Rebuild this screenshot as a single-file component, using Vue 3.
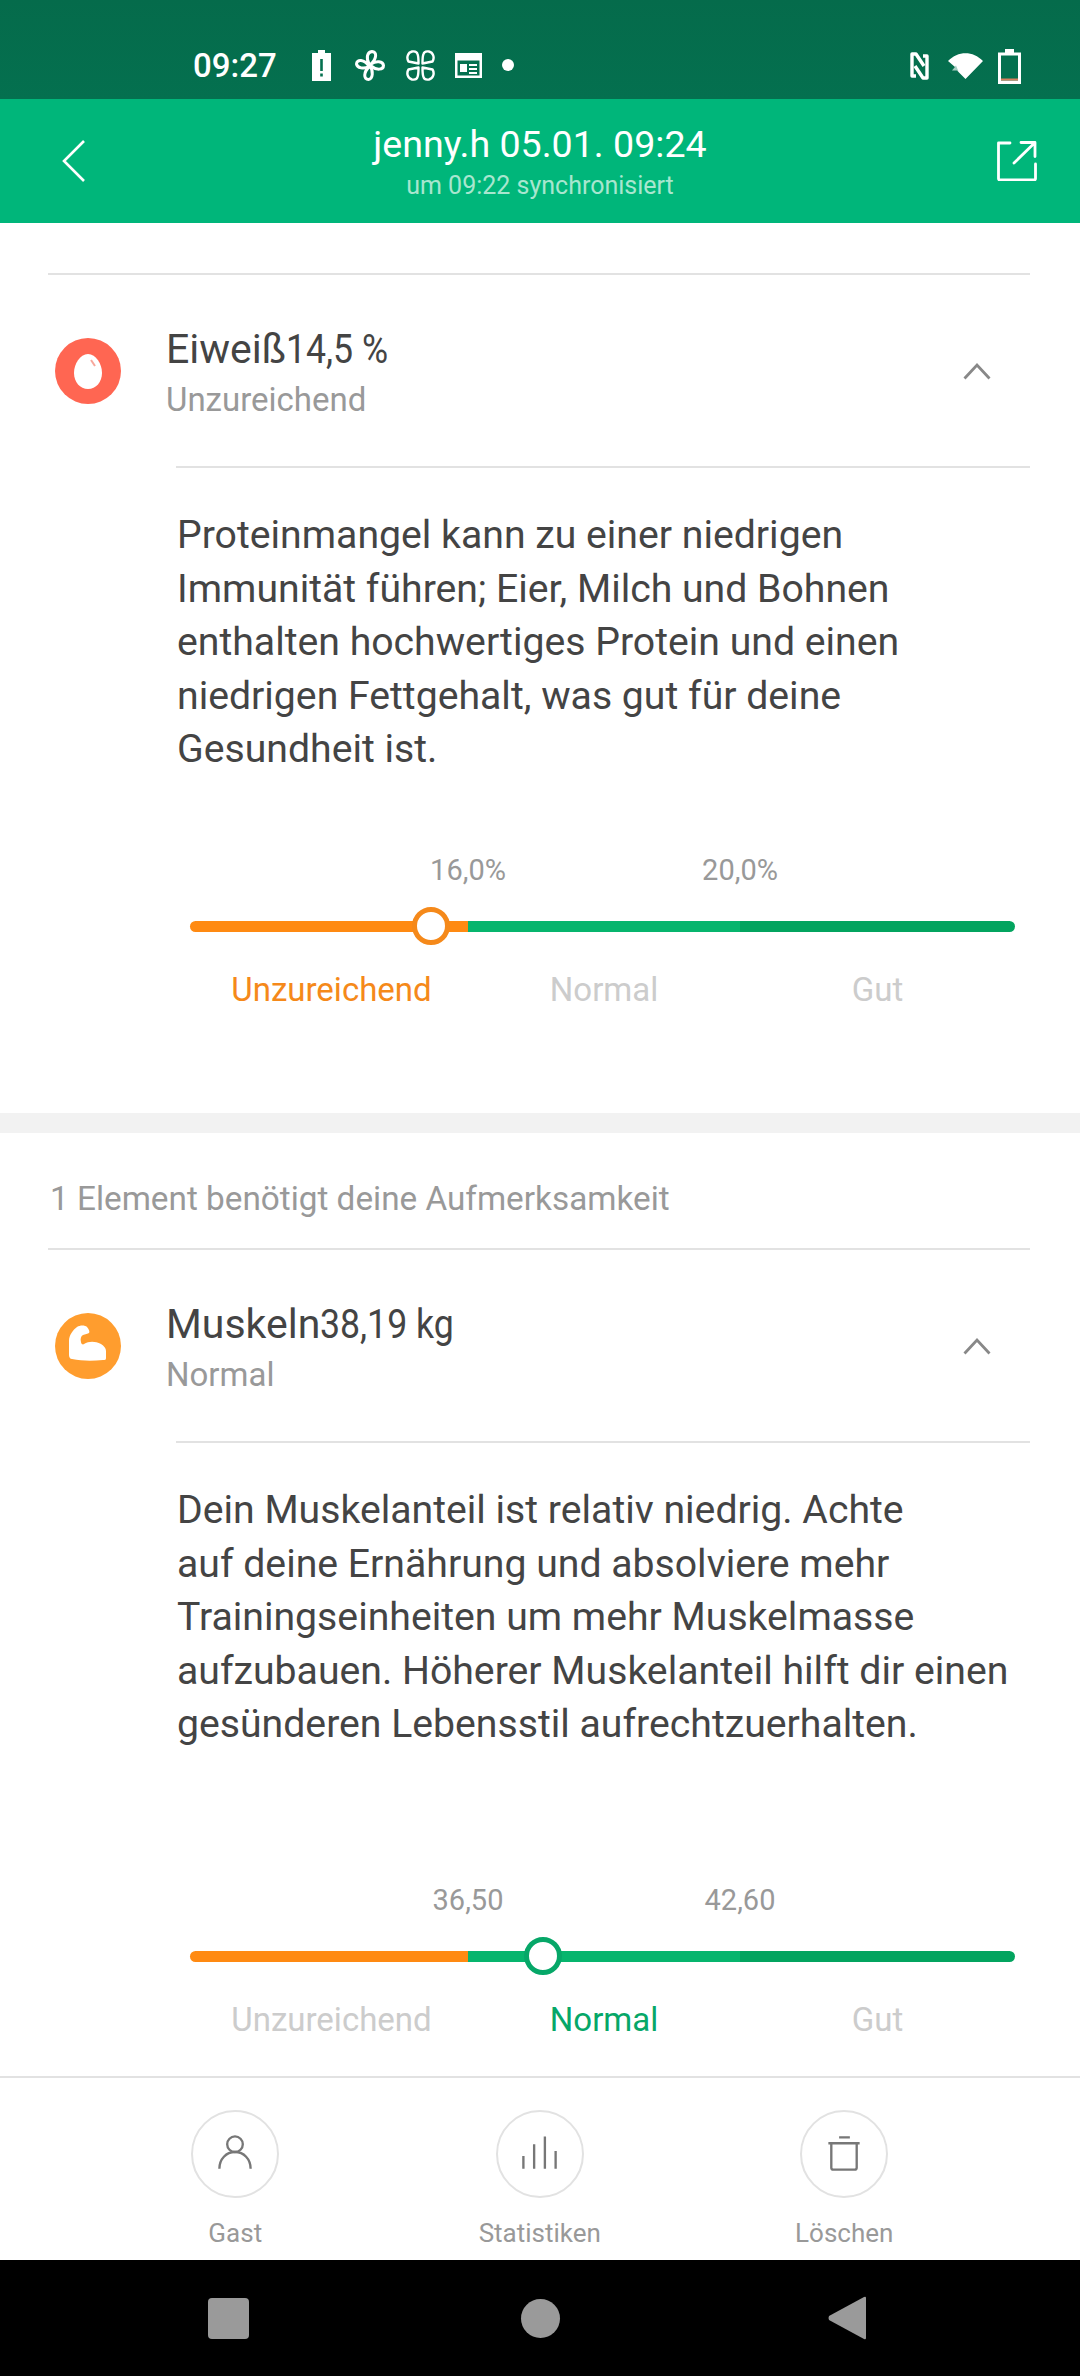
<template>
  <div class="page">
    <div class="status-bar">
      <span class="clock">09:27</span>
      <svg class="st st-alert" viewBox="0 0 19 31"><path d="M6 0h7v3h6v28H0V3h6z" fill="#fff"/><path d="M8.200 9h2.600v12H8.200zM8.200 23.500h2.600v3H8.200z" fill="#04704f"/></svg>
      <svg class="st st-fan" viewBox="0 0 30 31" fill="none" stroke="#fff" stroke-width="3" stroke-linejoin="round"><path d="M14 14C11 8 12 2 17 1.500c5 0 5 7-1 12.500zM16 14c5-3.500 12-3 12.500 1.500 0 4.500-7 5-12.500.5zM15 16c3.500 5 3 13-1.500 13.500-5 0-5.500-7.500 1.500-13.500zM14 16.500C9 19.500 2 18 1.500 14c0-5 8-5 12.500 2.500z"/></svg>
      <svg class="st st-clover" viewBox="0 0 31 31" fill="none" stroke="#fff" stroke-width="2.400" stroke-linejoin="round"><path d="M13.500 13.500 3.500 11.500c-2.500-4-.5-9 3.500-10 3-.5 5 .5 5.500 2.500 1 2 1 5.500 1 9.500zM17.500 13.500l10-2c2.500-4 .5-9-3.500-10-3-.5-5 .5-5.500 2.500-1 2-1 5.500-1 9.500zM13.500 17.500l-10 2c-2.500 4-.5 9 3.500 10 3 .5 5-.5 5.500-2.500 1-2 1-5.500 1-9.500zM17.500 17.500l10 2c2.500 4 .5 9-3.500 10-3 .5-5-.5-5.500-2.500-1-2-1-5.500-1-9.500z"/></svg>
      <svg class="st st-news" viewBox="0 0 27 25"><path d="M0 0h27v25H0z" fill="#fff"/><path d="M2.500 7.500h22v15h-22z" fill="#04704f"/><path d="M5 11h7v8H5zM14 11h8v2h-8zM14 15h8v2h-8zM14 19h8v2h-8z" fill="#fff"/></svg>
      <span class="st-dot"></span>
      <span class="st-gap"></span>
      <svg class="st st-nfc" viewBox="0 0 19 28" fill="none" stroke="#fff" stroke-width="3.400" stroke-linejoin="round"><path d="M6 24H2V2h4l8 12"/><path d="M13 4h4v22h-4L5 14"/></svg>
      <svg class="st st-wifi" viewBox="0 0 35 26"><path d="M0 8C10-2.500 25-2.500 35 8L17.500 26 9 17.500 4 17.500 7 14z" fill="#fff"/><path d="M8 12.500 3 18.500h7.500z" fill="#04704f" opacity=".35"/></svg>
      <svg class="st st-batt" viewBox="0 0 23 35"><path d="M7 0h9v3.500h7V35H0V3.500h7z" fill="#fff"/><path d="M3 6.500h17v25H3z" fill="#04704f"/><path d="M3 29.500h17v2H3z" fill="#d9805f"/></svg>
    </div>

    <header class="top-bar">
      <svg class="back" viewBox="0 0 24 42" fill="none" stroke="#fff" stroke-width="2.600"><path d="M22 1 2 21l20 20"/></svg>
      <div class="top-title">
        <div class="top-name">jenny.h 05.01. 09:24</div>
        <div class="top-sync">um 09:22 synchronisiert</div>
      </div>
      <svg class="share" viewBox="0 0 40 40" fill="none" stroke="#fff" stroke-width="2.800" stroke-linecap="round" stroke-linejoin="round"><path d="M13 2H1.500v35.500q0 1.500 1.500 1.500h34q1.500 0 1.500-1.500V23"/><path d="M17 22 37.500 2M24 1.500h14v14"/></svg>
    </header>

    <main class="content">
      <section v-for="m in metrics" :key="m.name" class="metric" :class="m.cls">
        <p v-if="m.notice" class="notice">{{ m.notice }}</p>
        <div class="rule"></div>
        <div class="metric-row">
          <svg v-if="m.icon === 'egg'" class="metric-icon" viewBox="0 0 66 66">
            <circle cx="33" cy="33" r="33" fill="#ff6652"/>
            <path d="M33 16c8 0 14 10 14 19 0 9-6 16-14 16s-14-7-14-16c0-9 6-19 14-19z" fill="#fff"/>
            <path d="M36 22l4 6" stroke="#f7a79c" stroke-width="2" fill="none"/>
          </svg>
          <svg v-else class="metric-icon" viewBox="0 0 66 66">
            <circle cx="33" cy="33" r="33" fill="#ff9d2e"/>
            <path d="M14 28c0-6 4-11 8-14 3-2 8-2 10 0 2 2 3 5 2 6-1 1-4 1-6 2-2 1-3 4-2 7 0 2 2 3 3 2 5-3 11-3 17 0 3 2 5 4 5 7v7c0 2-1 2-3 2-11 1-21 1-31-1-2 0-3-2-3-4z" fill="#fff"/>
          </svg>
          <div class="metric-text">
            <div class="metric-title">{{ m.name }}<span class="metric-value">{{ m.value }}</span></div>
            <div class="metric-state">{{ m.state }}</div>
          </div>
          <svg class="chevron" viewBox="0 0 28 18" fill="none" stroke="#888" stroke-width="2.800"><path d="M1.500 16.500 14 3l12.500 13.500"/></svg>
        </div>
        <div class="metric-detail">
          <p class="desc">
            <template v-for="line in m.lines" :key="line">{{ line }}<br></template>
          </p>
          <div class="slider">
            <div class="bounds">
              <span v-for="b in m.bounds" :key="b">{{ b }}</span>
            </div>
            <div class="track">
              <span class="seg seg-low"></span>
              <span class="seg seg-mid"></span>
              <span class="seg seg-high"></span>
              <span class="thumb" :style="{ left: m.thumb + 'px', borderColor: m.color }"></span>
            </div>
            <div class="ranges">
              <span v-for="(r, i) in ranges" :key="r" :style="i === m.active ? { color: m.color } : null">{{ r }}</span>
            </div>
          </div>
        </div>
      </section>
    </main>

    <nav class="actions">
      <div class="action">
        <span class="action-circle">
          <svg viewBox="0 0 86 86" fill="none" stroke="#777" stroke-width="2.400"><circle cx="43" cy="33" r="8"/><path d="M27 58c0-10 7-17 16-17s16 7 16 17"/></svg>
        </span>
        <span class="action-label">Gast</span>
      </div>
      <div class="action">
        <span class="action-circle">
          <svg viewBox="0 0 86 86" fill="none" stroke="#777" stroke-width="2.400"><path d="M26 58V45M37 58V33M48 58V25M59 58V40"/></svg>
        </span>
        <span class="action-label">Statistiken</span>
      </div>
      <div class="action">
        <span class="action-circle">
          <svg viewBox="0 0 86 86" fill="none" stroke="#777" stroke-width="2.400"><path d="M30 33v24q0 2 2 2h22q2 0 2-2V33M27 32h32M38 26h11"/></svg>
        </span>
        <span class="action-label">Löschen</span>
      </div>
    </nav>

    <div class="nav-bar">
      <span class="nav-square"></span>
      <span class="nav-circle"></span>
      <svg class="nav-back" viewBox="0 0 38 44"><path d="M36 1q2-1 2 1v40q0 2-2 1L1 24q-1-2 0-4z" fill="#9a9a9a"/></svg>
    </div>
  </div>
</template>

<script setup>
const ranges = ['Unzureichend', 'Normal', 'Gut']

const metrics = [
  {
    name: 'Eiweiß',
    value: '14,5 %',
    state: 'Unzureichend',
    icon: 'egg',
    cls: 'metric-first',
    lines: [
      'Proteinmangel kann zu einer niedrigen',
      'Immunität führen; Eier, Milch und Bohnen',
      'enthalten hochwertiges Protein und einen',
      'niedrigen Fettgehalt, was gut für deine',
      'Gesundheit ist.'
    ],
    bounds: ['16,0%', '20,0%'],
    thumb: 241,
    active: 0,
    color: '#f5891a'
  },
  {
    name: 'Muskeln',
    value: '38,19 kg',
    state: 'Normal',
    icon: 'arm',
    cls: 'metric-second',
    notice: '1 Element benötigt deine Aufmerksamkeit',
    lines: [
      'Dein Muskelanteil ist relativ niedrig. Achte',
      'auf deine Ernährung und absolviere mehr',
      'Trainingseinheiten um mehr Muskelmasse',
      'aufzubauen. Höherer Muskelanteil hilft dir einen',
      'gesünderen Lebensstil aufrechtzuerhalten.'
    ],
    bounds: ['36,50', '42,60'],
    thumb: 353,
    active: 1,
    color: '#06a768'
  }
]
</script>

<style scoped>
.page {
  width: 1080px;
  height: 2376px;
  display: flex;
  flex-direction: column;
  overflow: hidden;
  background: #fff;
  font-family: Roboto, "Noto Sans", sans-serif;
}

.status-bar {
  height: 99px;
  flex-shrink: 0;
  box-sizing: border-box;
  padding: 50px 59px 0 193px;
  display: flex;
  align-items: flex-start;
  background: linear-gradient(#056b4b, #04704f);
}

.clock {
  width: 119px;
  font-size: 33px;
  font-weight: 500;
  line-height: 32px;
  color: #fff;
}

.st {
  display: block;
  flex-shrink: 0;
}

.st-alert { width: 19px; height: 31px; margin-right: 24px; }
.st-fan { width: 30px; height: 31px; margin-right: 20px; }
.st-clover { width: 31px; height: 31px; margin-right: 19px; }
.st-news { width: 27px; height: 25px; margin-top: 3px; margin-right: 20px; }
.st-dot { width: 12px; height: 12px; margin-top: 9px; border-radius: 50%; background: #fff; }
.st-gap { flex: 1; }
.st-nfc { width: 19px; height: 28px; margin-top: 2px; margin-right: 19px; }
.st-wifi { width: 35px; height: 26px; margin-top: 3px; margin-right: 15px; }
.st-batt { width: 23px; height: 35px; margin-top: -1px; }

.top-bar {
  height: 124px;
  flex-shrink: 0;
  box-sizing: border-box;
  padding: 0 43px 0 62px;
  display: flex;
  align-items: center;
  justify-content: space-between;
  background: #00b67a;
}

.back {
  width: 24px;
  height: 42px;
}

.top-title {
  text-align: center;
  color: #fff;
  margin-left: -3px;
}

.top-name {
  font-size: 37.600px;
  line-height: 46px;
}

.top-sync {
  font-size: 25px;
  line-height: 30px;
  margin-top: 4px;
  color: #a8e6cf;
}

.share {
  width: 40px;
  height: 40px;
}

.content {
  flex: 1;
  min-height: 0;
}

.metric-first {
  padding-top: 50px;
  height: 840px;
  border-bottom: 20px solid #f2f2f2;
}

.metric-second .desc {
  margin-bottom: 129px;
}

.notice {
  margin: 0;
  height: 115px;
  box-sizing: border-box;
  padding: 47px 0 0 50px;
  font-size: 33.300px;
  line-height: 38px;
  color: #999;
}

.rule {
  height: 2px;
  margin: 0 50px 0 48px;
  background: #e2e2e2;
}

.metric-row {
  height: 191px;
  box-sizing: border-box;
  padding: 0 50px 0 55px;
  display: flex;
  align-items: center;
}

.metric-icon {
  width: 66px;
  height: 66px;
  flex-shrink: 0;
}

.metric-text {
  flex: 1;
  margin-left: 45px;
  padding-top: 3px;
}

.metric-title {
  font-size: 41px;
  line-height: 50px;
  color: #444;
}

.metric-value {
  display: inline-block;
  transform: scaleX(.87);
  transform-origin: left center;
}

.metric-state {
  margin-top: 6px;
  font-size: 33px;
  line-height: 40px;
  color: #999;
}

.chevron {
  width: 28px;
  height: 18px;
  margin-right: 39px;
}

.metric-detail {
  margin-left: 176px;
}

.desc {
  margin: 0 50px 74px 0;
  padding: 41px 0 0 1px;
  border-top: 2px solid #e2e2e2;
  font-size: 39.200px;
  line-height: 53.500px;
  color: #444;
  white-space: nowrap;
}

.slider {
  margin-left: 14px;
  width: 825px;
}

.bounds {
  display: flex;
  gap: 152px;
  padding-left: 218px;
  height: 40px;
  margin-top: -1px;
}

.bounds span {
  width: 120px;
  text-align: center;
  font-size: 29px;
  line-height: 40px;
  color: #999;
}

.track {
  position: relative;
  height: 11px;
  margin-top: 31px;
  display: flex;
}

.seg {
  display: block;
  height: 100%;
}

.seg-low {
  width: 278px;
  background: #ff8a12;
  border-radius: 6px 0 0 6px;
}

.seg-mid {
  width: 272px;
  background: #06b56d;
}

.seg-high {
  width: 275px;
  background: #03a45f;
  border-radius: 0 6px 6px 0;
}

.thumb {
  position: absolute;
  top: -14px;
  width: 38px;
  height: 38px;
  box-sizing: border-box;
  border: 5px solid;
  border-radius: 50%;
  background: #fff;
  margin-left: -19px;
}

.ranges {
  display: flex;
  margin-top: 38px;
}

.ranges span {
  font-size: 33px;
  line-height: 40px;
  text-align: center;
  color: #ccc;
  box-sizing: border-box;
}

.ranges span:nth-child(1) { width: 278px; padding-left: 5px; }
.ranges span:nth-child(2) { width: 272px; }
.ranges span:nth-child(3) { width: 275px; }

.actions {
  height: 184px;
  flex-shrink: 0;
  box-sizing: border-box;
  border-top: 2px solid #e2e2e2;
  padding: 32px 0 0 108px;
  display: flex;
  background: #fff;
}

.action {
  width: 254.500px;
  margin-right: 50px;
  display: flex;
  flex-direction: column;
  align-items: center;
}

.action-circle {
  width: 88px;
  height: 88px;
  box-sizing: border-box;
  border: 2px solid #e2e2e2;
  border-radius: 50%;
}

.action-circle svg {
  display: block;
  width: 84px;
  height: 84px;
}

.action-label {
  margin-top: 19px;
  font-size: 26px;
  line-height: 32px;
  color: #999;
}

.nav-bar {
  height: 116px;
  flex-shrink: 0;
  box-sizing: border-box;
  padding: 36px 0 0 208px;
  display: flex;
  align-items: flex-start;
  background: #000;
}

.nav-square {
  width: 41px;
  height: 41px;
  margin-top: 2px;
  border-radius: 4px;
  background: #9a9a9a;
}

.nav-circle {
  width: 39px;
  height: 39px;
  margin: 3px 0 0 272px;
  border-radius: 50%;
  background: #9a9a9a;
}

.nav-back {
  width: 38px;
  height: 44px;
  margin-left: 268px;
}
</style>
